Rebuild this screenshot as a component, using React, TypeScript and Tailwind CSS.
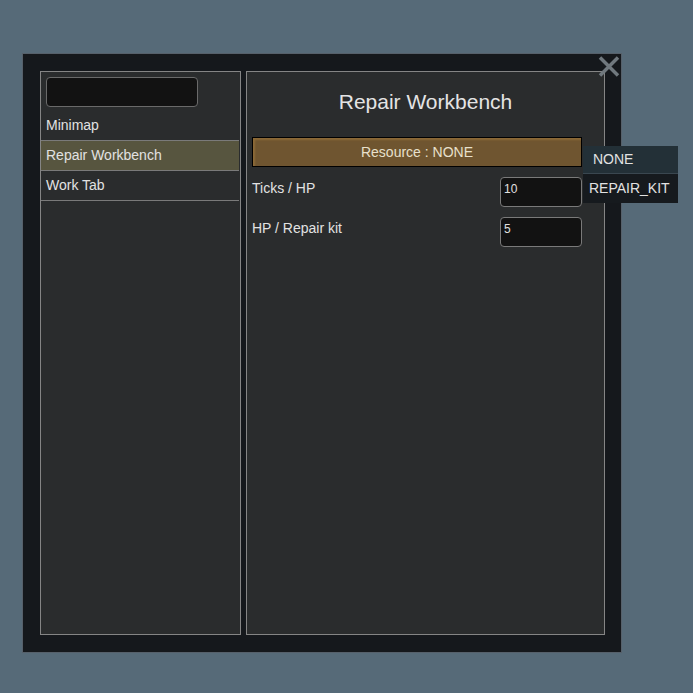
import React from "react";

const items = ["Minimap", "Repair Workbench", "Work Tab"];

export default function App() {
  return (
    <div
      className="relative w-[693px] h-[693px] overflow-hidden bg-[#566a78] pt-[53px] pl-[22px]"
      style={{ fontFamily: '"Liberation Sans", Arial, sans-serif' }}
    >
      <div className="relative flex w-[600px] h-[600px] border border-[#56606a] bg-[#15181c] p-[17px] pr-[16px] gap-[5px]">
        {/* left list */}
        <div className="flex flex-col w-[201px] h-[564px] border border-[#858585] bg-[#2a2c2d]">
          <div className="px-[5px] pt-[5px] pb-[4px]">
            <div className="w-[152px] h-[30px] rounded-[4px] border border-[#6a6a6a] bg-[#121212]" />
          </div>
          {items.map((it, i) => (
            <div
              key={it}
              className={
                "h-[30px] flex items-center pl-[5px] text-[14px] text-[#e2e2e2] border-b border-[#7a7a7a] mr-[1px] " +
                (i === 1 ? "bg-[#57553f]" : "")
              }
            >
              {it}
            </div>
          ))}
        </div>

        {/* right panel */}
        <div className="flex flex-col w-[359px] h-[564px] border border-[#858585] bg-[#2a2c2d] px-[5px]">
          <div className="h-[65px] flex justify-center text-[21px] text-[#e4e4e4] pt-[14px]">
            Repair Workbench
          </div>
          <div className="w-[330px] h-[30px] border border-black bg-[#6f5530] shadow-[inset_2px_2px_2px_rgba(160,120,60,0.6)] flex items-center justify-center text-[14px] text-[#e8e0cc]">
            Resource : NONE
          </div>
          <div className="flex items-start justify-between w-[330px] mt-[10px]">
            <span className="text-[14px] text-[#e2e2e2] mt-[1px]">Ticks / HP</span>
            <div className="w-[82px] h-[30px] rounded-[4px] border border-[#7a7a7a] bg-[#121212] text-[12px] text-[#e0e0e0] pl-[3px] pt-[2px]">
              10
            </div>
          </div>
          <div className="flex items-start justify-between w-[330px] mt-[10px]">
            <span className="text-[14px] text-[#e2e2e2] mt-[1px]">HP / Repair kit</span>
            <div className="w-[82px] h-[30px] rounded-[4px] border border-[#7a7a7a] bg-[#121212] text-[12px] text-[#e0e0e0] pl-[3px] pt-[2px]">
              5
            </div>
          </div>
        </div>

        {/* close */}
        <svg className="absolute top-[2px] right-[1px]" width="22" height="21" viewBox="0 0 22 21">
          <path d="M2 1.5 L20 19.5 M20 1.5 L2 19.5" stroke="#70787e" strokeWidth="3.5" />
        </svg>
      </div>

      {/* dropdown */}
      <div className="absolute left-[583px] top-[146px] w-[95px] flex flex-col text-[14px] text-[#e2e2e2]">
        <div className="h-[28px] bg-[#233037] pl-[10px] flex items-center border-b border-[#3a4750]">NONE</div>
        <div className="h-[29px] bg-[#161a1e] pl-[6px] flex items-center">REPAIR_KIT</div>
      </div>
    </div>
  );
}
